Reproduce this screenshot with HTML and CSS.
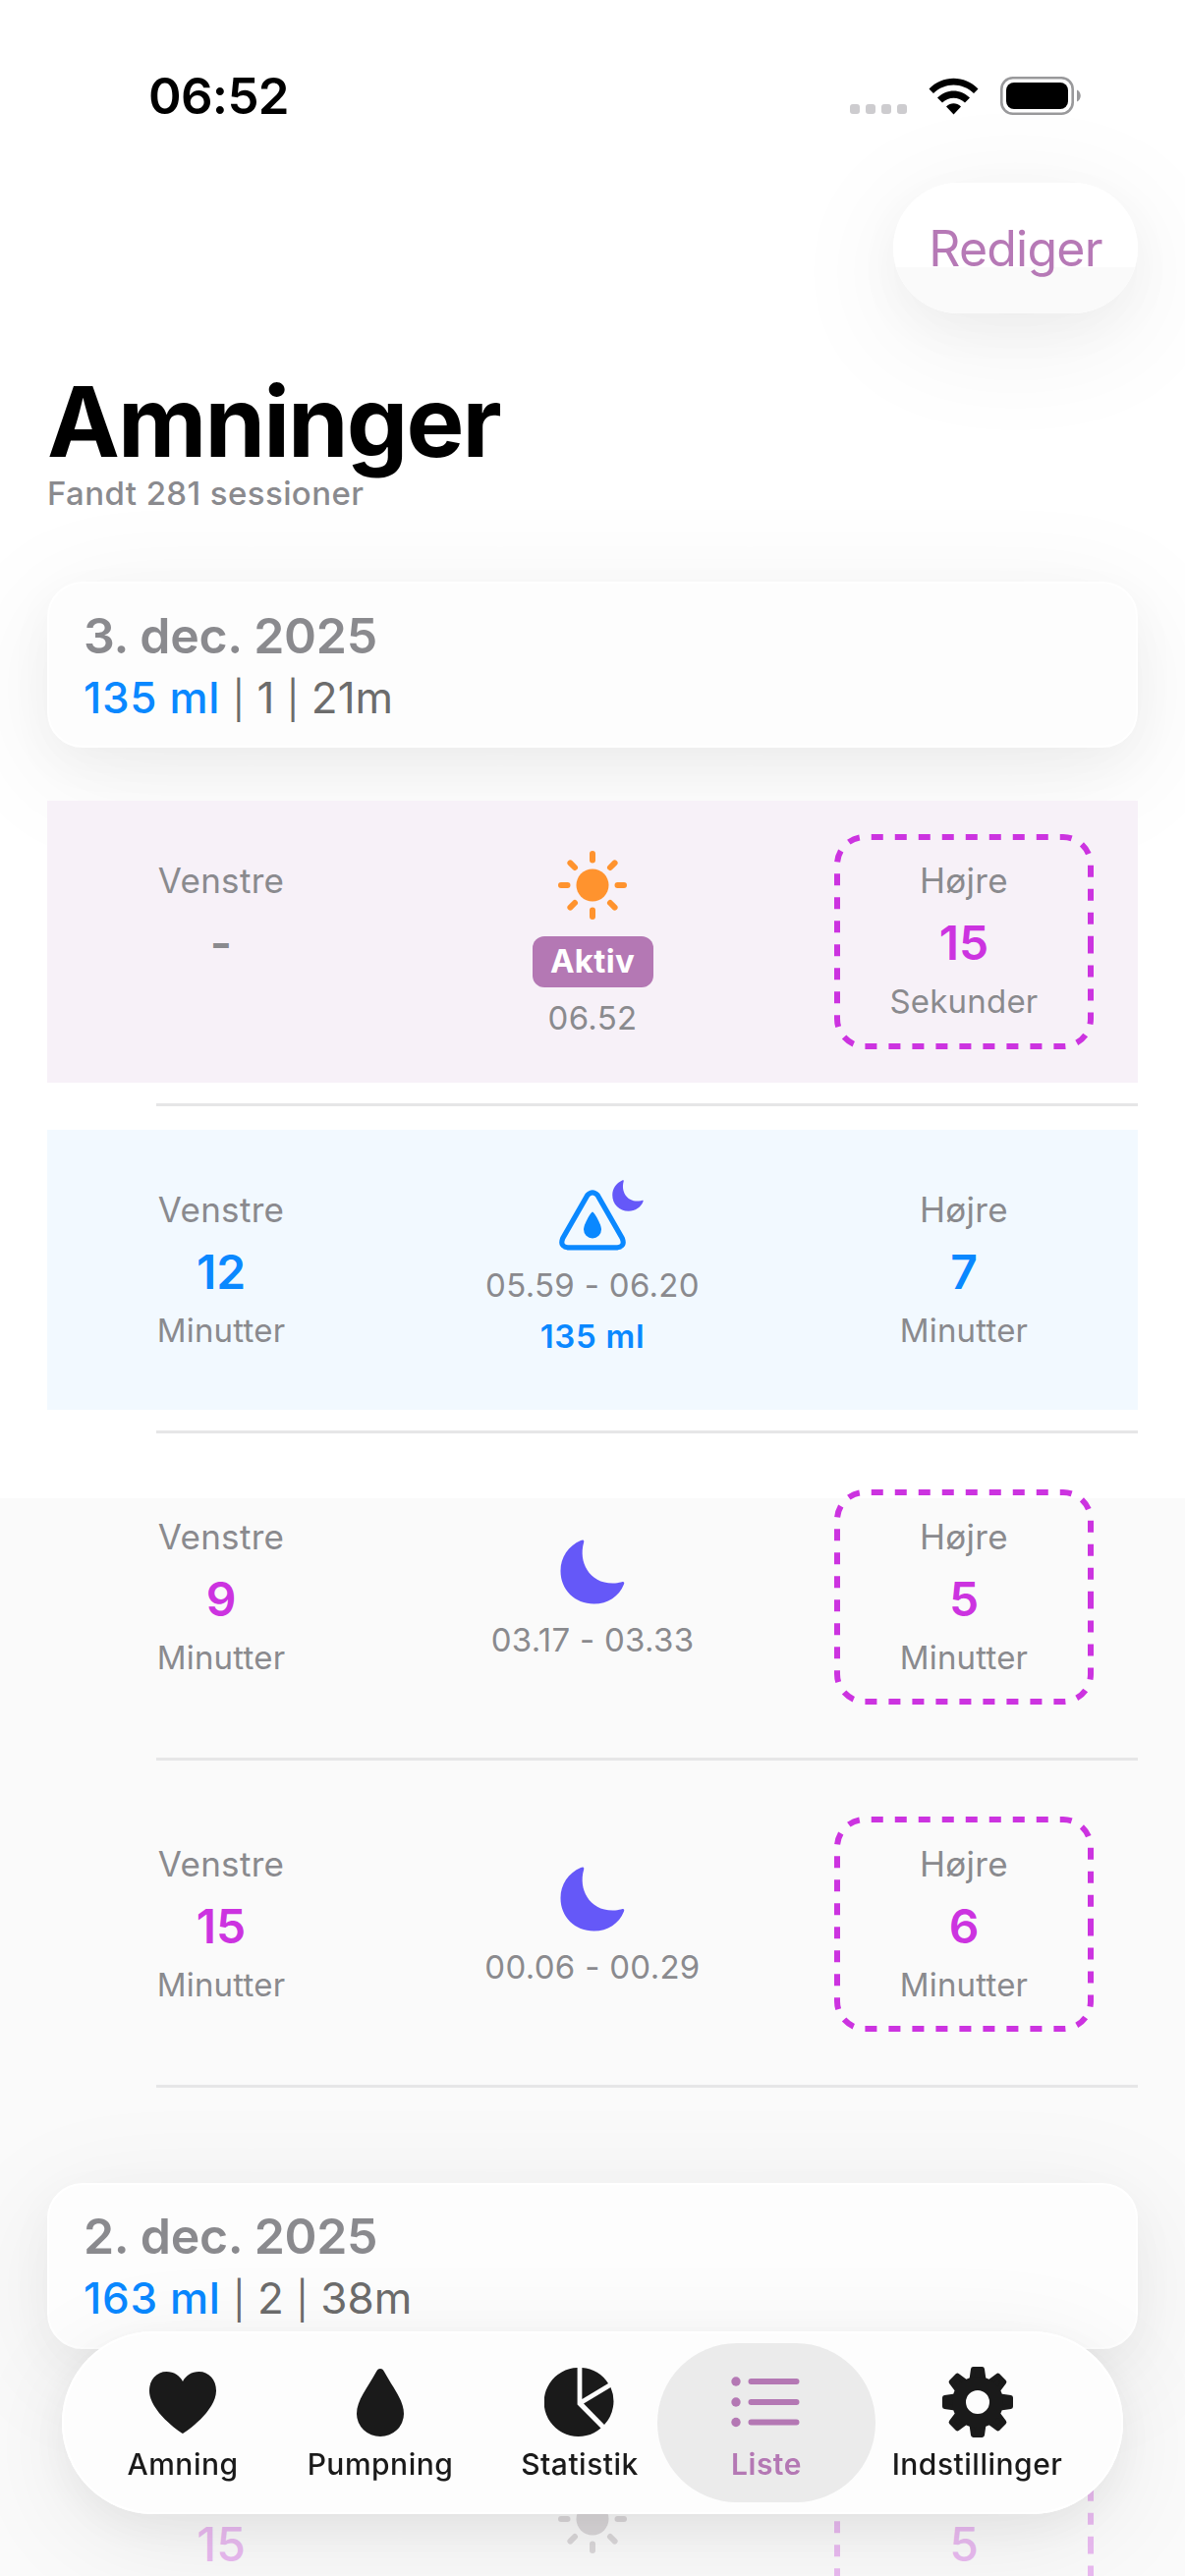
FILE: index.html
```
<!DOCTYPE html>
<html lang="da">
<head>
    <meta charset="UTF-8">
    <meta name="viewport" content="width=device-width, initial-scale=1.0">
    <title>Amninger</title>
    <link rel="stylesheet" href="styles.css">
</head>
<body>

<!-- Shared icons -->
<svg class="symbols" width="0" height="0">
    <symbol id="moon" viewBox="0 0 66 66">
        <path d="M23 0.5C24.500 0.500 24.500 2 24 3.500C18.500 23 30 46 56 44.500C59 44.300 61.500 43.500 63.500 43C65 42.700 65.700 43.800 65 45.500C60 58 48.500 65.500 34.500 65.500C15 65.500 0.500 51 0.500 32C0.500 18 8.500 6.500 21 1C21.700 0.700 22.300 0.500 23 0.500Z"/>
    </symbol>
    <symbol id="sun" viewBox="0 0 70 70">
        <circle cx="35" cy="35" r="16.500"/>
        <path d="M35 3v6.500M35 60.500v6.500M3 35h6.500M60.500 35h6.500M12.400 12.400l4.600 4.600M53 53l4.600 4.600M12.400 57.600l4.600-4.600M53 17l4.600-4.600" stroke="currentColor" stroke-width="6" stroke-linecap="round"/>
    </symbol>
    <symbol id="frame" viewBox="0 0 264 219">
        <path d="M261 109.500V188A28 28 0 0 1 233 216H31A28 28 0 0 1 3 188V31A28 28 0 0 1 31 3H233A28 28 0 0 1 261 31Z" fill="none" stroke="currentColor" stroke-width="6" stroke-dasharray="12 12"/>
    </symbol>
</svg>

<div class="status-bar">
    <span class="clock">06:52</span>
    <div class="status-icons">
        <div class="signal"><i></i><i></i><i></i><i></i></div>
        <svg class="wifi" width="51" height="38" viewBox="0 0 51 38">
            <path d="M0.500 11.500C14 -3 37 -3 50.500 11.500L46 16C34.500 4.500 16.500 4.500 5 16Z"/>
            <path d="M9 20.500C18.500 11 32.500 11 42 20.500L37 25.500C30.500 19 20.500 19 14 25.500Z"/>
            <path d="M18 29.500C22.500 25.300 28.500 25.300 33 29.500L25.500 37.500Z"/>
        </svg>
        <svg class="battery" width="82" height="39" viewBox="0 0 82 39">
            <rect x="1.300" y="1.300" width="72.400" height="36.400" rx="11.500" fill="none" stroke="#99999b" stroke-width="2.600"/>
            <rect x="6" y="6" width="63" height="27" rx="8"/>
            <path d="M78 13.500C83 15.500 83 23.500 78 25.500Z" fill="#99999b"/>
        </svg>
    </div>
</div>

<header>
    <button class="edit">Rediger</button>
    <h1>Amninger</h1>
    <p class="subtitle">Fandt 281 sessioner</p>
</header>

<main class="container">
    <section class="day">
        <div class="day-card">
            <h2>3. dec. 2025</h2>
            <p><b>135 ml</b> <i>|</i> 1 <i>|</i> 21m</p>
        </div>

        <div class="session active">
            <div class="side">
                <span class="name">Venstre</span>
                <span class="value none">-</span>
            </div>
            <div class="middle">
                <svg class="sun" width="70" height="70"><use href="#sun"/></svg>
                <span class="badge">Aktiv</span>
                <span class="time">06.52</span>
            </div>
            <div class="side">
                <svg class="frame" width="264" height="219"><use href="#frame"/></svg>
                <span class="name">Højre</span>
                <span class="value">15</span>
                <span class="unit">Sekunder</span>
            </div>
        </div>
        <hr>

        <div class="session bottle">
            <div class="side">
                <span class="name">Venstre</span>
                <span class="value">12</span>
                <span class="unit">Minutter</span>
            </div>
            <div class="middle">
                <div class="bottle-icon">
                    <svg width="68" height="62" viewBox="0 0 68 62">
                        <path d="M28.800 5.600Q34 0 39.200 5.600L64.300 49.500Q67.500 57.500 59.500 58.800H8.500Q0.500 57.500 3.700 49.500Z" fill="none" stroke="currentColor" stroke-width="5.200"/>
                        <path d="M34 22.500C35.500 22.500 43 35 43 40.500A9 9 0 0 1 25 40.500C25 35 32.500 22.500 34 22.500Z"/>
                    </svg>
                    <svg class="small-moon" width="32" height="32"><use href="#moon"/></svg>
                </div>
                <span class="time">05.59 - 06.20</span>
                <span class="amount">135 ml</span>
            </div>
            <div class="side">
                <span class="name">Højre</span>
                <span class="value">7</span>
                <span class="unit">Minutter</span>
            </div>
        </div>
        <hr>

        <div class="session">
            <div class="side">
                <span class="name">Venstre</span>
                <span class="value">9</span>
                <span class="unit">Minutter</span>
            </div>
            <div class="middle">
                <svg class="moon" width="66" height="66"><use href="#moon"/></svg>
                <span class="time">03.17 - 03.33</span>
            </div>
            <div class="side">
                <svg class="frame" width="264" height="219"><use href="#frame"/></svg>
                <span class="name">Højre</span>
                <span class="value">5</span>
                <span class="unit">Minutter</span>
            </div>
        </div>
        <hr>

        <div class="session">
            <div class="side">
                <span class="name">Venstre</span>
                <span class="value">15</span>
                <span class="unit">Minutter</span>
            </div>
            <div class="middle">
                <svg class="moon" width="66" height="66"><use href="#moon"/></svg>
                <span class="time">00.06 - 00.29</span>
            </div>
            <div class="side">
                <svg class="frame" width="264" height="219"><use href="#frame"/></svg>
                <span class="name">Højre</span>
                <span class="value">6</span>
                <span class="unit">Minutter</span>
            </div>
        </div>
        <hr>
    </section>

    <section class="day second">
        <div class="day-card">
            <h2>2. dec. 2025</h2>
            <p><b>163 ml</b> <i>|</i> 2 <i>|</i> 38m</p>
        </div>

        <div class="session faded">
            <div class="side">
                <span class="name"></span>
                <span class="value">15</span>
            </div>
            <div class="middle">
                <svg class="sun" width="70" height="70"><use href="#sun"/></svg>
                <span class="time">20.00 - 20.18</span>
            </div>
            <div class="side">
                <svg class="frame" width="264" height="219"><use href="#frame"/></svg>
                <span class="name"></span>
                <span class="value">5</span>
            </div>
        </div>
    </section>
</main>

<nav class="tabs">
    <a class="tab amning">
        <svg width="72" height="72" viewBox="0 0 72 72"><path d="M36 68C33 66.500 2 45 2 24.500C2 13 9.500 5 19.500 5C27 5 33 9 36 15C39 9 45 5 52.500 5C62.500 5 70 13 70 24.500C70 45 39 66.500 36 68Z"/></svg>
        <span>Amning</span>
    </a>
    <a class="tab pumpning">
        <svg width="72" height="72" viewBox="0 0 72 72"><path d="M36 2C38 2 39 3 40 5C49 21.500 60 34 60 48A24 23 0 0 1 12 48C12 34 23 21.500 32 5C33 3 34 2 36 2Z"/></svg>
        <span>Pumpning</span>
    </a>
    <a class="tab statistik">
        <svg width="72" height="72" viewBox="0 0 72 72">
            <path d="M33.600 1A35 35 0 1 0 57.500 62.500L33.600 38.500Z"/>
            <path d="M38.400 1A35 35 0 0 1 65 17L38.400 33Z"/>
            <path d="M67.500 21A35 35 0 0 1 61 59L40 37.500Z"/>
        </svg>
        <span>Statistik</span>
    </a>
    <a class="tab liste selected">
        <svg width="72" height="72" viewBox="0 0 72 72">
            <circle cx="5" cy="15" r="4.700"/>
            <circle cx="5" cy="36" r="4.700"/>
            <circle cx="5" cy="56.500" r="4.700"/>
            <path d="M20.500 15H66.500M20.500 36H66.500M20.500 56.500H66.500" stroke="currentColor" stroke-width="6" stroke-linecap="round"/>
        </svg>
        <span>Liste</span>
    </a>
    <a class="tab indstillinger">
        <svg width="72" height="72" viewBox="0 0 72 72">
            <g stroke="currentColor" stroke-width="5" stroke-linejoin="round">
                <path d="M30 13L31.500 2.500H40.500L42 13Z"/>
                <path d="M30 13L31.500 2.500H40.500L42 13Z" transform="rotate(45 36 36)"/>
                <path d="M30 13L31.500 2.500H40.500L42 13Z" transform="rotate(90 36 36)"/>
                <path d="M30 13L31.500 2.500H40.500L42 13Z" transform="rotate(135 36 36)"/>
                <path d="M30 13L31.500 2.500H40.500L42 13Z" transform="rotate(180 36 36)"/>
                <path d="M30 13L31.500 2.500H40.500L42 13Z" transform="rotate(225 36 36)"/>
                <path d="M30 13L31.500 2.500H40.500L42 13Z" transform="rotate(270 36 36)"/>
                <path d="M30 13L31.500 2.500H40.500L42 13Z" transform="rotate(315 36 36)"/>
            </g>
            <circle cx="36" cy="36" r="19" fill="none" stroke="currentColor" stroke-width="14"/>
        </svg>
        <span>Indstillinger</span>
    </a>
</nav>

</body>
</html>
```
FILE: styles.css
```
* {
    box-sizing: border-box;
}
body {
    margin: 0;
    height: 2622px;
    overflow: hidden;
    font-family: Inter, "Liberation Sans", sans-serif;
    background: linear-gradient(#ffffff 1525px, #fafafa 1525px);
    color: #000;
}
h1, h2, p {
    margin: 0;
}
.symbols {
    position: absolute;
}

/* Status bar */
.status-bar {
    height: 186px;
    padding: 67px 106px 0 151px;
    display: flex;
    justify-content: space-between;
    align-items: flex-start;
}
.clock {
    font-size: 51px;
    line-height: 62px;
    font-weight: 600;
    letter-spacing: -0.7px;
}
.status-icons {
    display: flex;
    align-items: flex-end;
    height: 50px;
}
.signal {
    display: flex;
    gap: 6px;
    margin: 0 22px 1px 0;
}
.signal i {
    width: 10px;
    height: 10px;
    border-radius: 3px;
    background-color: #cdcccf;
}
.wifi {
    margin-right: 22px;
}

/* Header */
header {
    display: flex;
    flex-direction: column;
    align-items: flex-start;
    height: 406px;
    padding: 0 48px;
}
.edit {
    align-self: flex-end;
    width: 249px;
    height: 133px;
    padding: 0;
    border: none;
    border-radius: 67px;
    background: linear-gradient(#ffffff 86px, #fafafa 86px);
    box-shadow: 0 24px 120px 10px rgba(0, 0, 0, 0.06), 0 16px 50px rgba(0, 0, 0, 0.035);
    color: #b679b6;
    font-family: inherit;
    font-size: 50px;
    letter-spacing: -0.8px;
}
h1 {
    margin-top: 50px;
    font-size: 99px;
    line-height: 112px;
    font-weight: 700;
    letter-spacing: -1.9px;
    padding-top: 4px;
}
.subtitle {
    margin-top: -3px;
    font-size: 33px;
    line-height: 40px;
    font-weight: 500;
    letter-spacing: 0.4px;
    color: #8a8a8e;
}

/* Days */
.container {
    padding: 0 48px;
}
.second {
    margin-top: 97px;
}
.day-card {
    height: 169px;
    margin-bottom: 54px;
    padding: 23px 35px;
    border: 2px solid #fff;
    border-radius: 36px;
    background-color: #fdfdfd;
    box-shadow: 0 24px 120px 10px rgba(0, 0, 0, 0.06), 0 16px 50px rgba(0, 0, 0, 0.035);
}
.second .day-card {
    padding-top: 22px;
}
.day-card h2 {
    font-size: 50px;
    line-height: 60px;
    font-weight: 600;
    letter-spacing: -0.3px;
    color: #8a8a8e;
}
.day-card p {
    font-size: 44px;
    line-height: 66px;
    color: #6c6c6c;
}
.day-card b {
    font-weight: 500;
    letter-spacing: 0.7px;
    color: #0a88ff;
}
/* divider bar, shorter than the font's own */
.day-card i {
    display: inline-block;
    font-size: 38px;
    font-style: normal;
    line-height: 40px;
}

/* Sessions */
.session {
    position: relative;
    display: flex;
    justify-content: space-between;
    height: 285px;
    padding: 0 45px;
    color: #8a8a8e;
}
.active {
    height: 287px;
    background-color: #f7f1f8;
}
.bottle {
    background-color: #f2f9ff;
}
hr {
    height: 3px;
    margin: 21px 0 24px 111px;
    border: none;
    background-color: #e6e6e7;
}
.side {
    position: relative;
    width: 264px;
    padding-top: 60px;
    display: flex;
    flex-direction: column;
    align-items: center;
}
.name, .unit {
    height: 42px;
    line-height: 42px;
}
.name {
    font-size: 35px;
    letter-spacing: 0.3px;
}
.unit {
    font-size: 33px;
    letter-spacing: 0.2px;
}
.value {
    height: 58px;
    margin: 14px 0 9px;
    font-size: 48px;
    line-height: 58px;
    font-weight: 600;
    color: #cc33e0;
}
.bottle .value {
    color: #0a88ff;
}
.value.none {
    color: #8a8a8e;
}
.frame {
    position: absolute;
    top: 33px;
    left: 0;
    color: #cc33e0;
}
.active .frame {
    top: 34px;
}
.middle {
    padding-top: 84px;
    display: flex;
    flex-direction: column;
    align-items: center;
}
.middle svg {
    fill: currentColor;
}
.time, .amount {
    font-size: 33px;
    line-height: 40px;
}
.time {
    letter-spacing: 0.3px;
}
.moon {
    color: #6558f8;
    margin-bottom: 16px;
}
.sun {
    color: #ff932e;
    margin-bottom: 17px;
}
.active .middle {
    padding-top: 51px;
}
.badge {
    width: 123px;
    height: 52px;
    margin-bottom: 11px;
    border-radius: 12px;
    background-color: #b478b4;
    color: #fff;
    font-size: 33px;
    line-height: 50px;
    font-weight: 700;
    letter-spacing: 0.3px;
    text-align: center;
}
.bottle .middle {
    padding-top: 61px;
}
.bottle-icon {
    position: relative;
    height: 62px;
    margin-bottom: 15px;
    color: #0a88ff;
}
.small-moon {
    position: absolute;
    top: -10px;
    left: 54px;
    color: #6558f8;
}
.amount {
    margin-top: 12px;
    font-weight: 600;
    letter-spacing: 0.7px;
    color: #0a88ff;
}
.faded .value, .faded .frame {
    color: #e9baf0;
}
.faded .value {
    font-weight: 500;
}
.faded .middle, .faded .sun {
    color: #dbd8da;
}

/* Tab bar */
.tabs {
    position: fixed;
    left: 63px;
    bottom: 63px;
    width: 1080px;
    height: 186px;
    padding: 12px;
    display: flex;
    border: none;
    border-radius: 93px;
    background-color: #fdfdfd;
    box-shadow: 0 24px 110px rgba(0, 0, 0, 0.08), 0 14px 50px rgba(0, 0, 0, 0.05), inset 0 0 0 2px #fff;
}
.tab {
    display: flex;
    flex-direction: column;
    align-items: center;
    height: 162px;
    padding-top: 24px;
    border-radius: 81px;
    color: #1a1a1a;
    font-size: 30px;
    line-height: 36px;
    font-weight: 500;
    letter-spacing: 0.5px;
}
.tab svg {
    fill: currentColor;
    margin-bottom: 9px;
}
.amning {
    width: 222px;
}
.pumpning {
    width: 180px;
}
.statistik {
    width: 158px;
    margin-left: 34px;
}
.liste {
    width: 222px;
}
.indstillinger {
    width: 207px;
}
.selected {
    background-color: #ebebeb;
    color: #b478b4;
    font-weight: 600;
}
```
